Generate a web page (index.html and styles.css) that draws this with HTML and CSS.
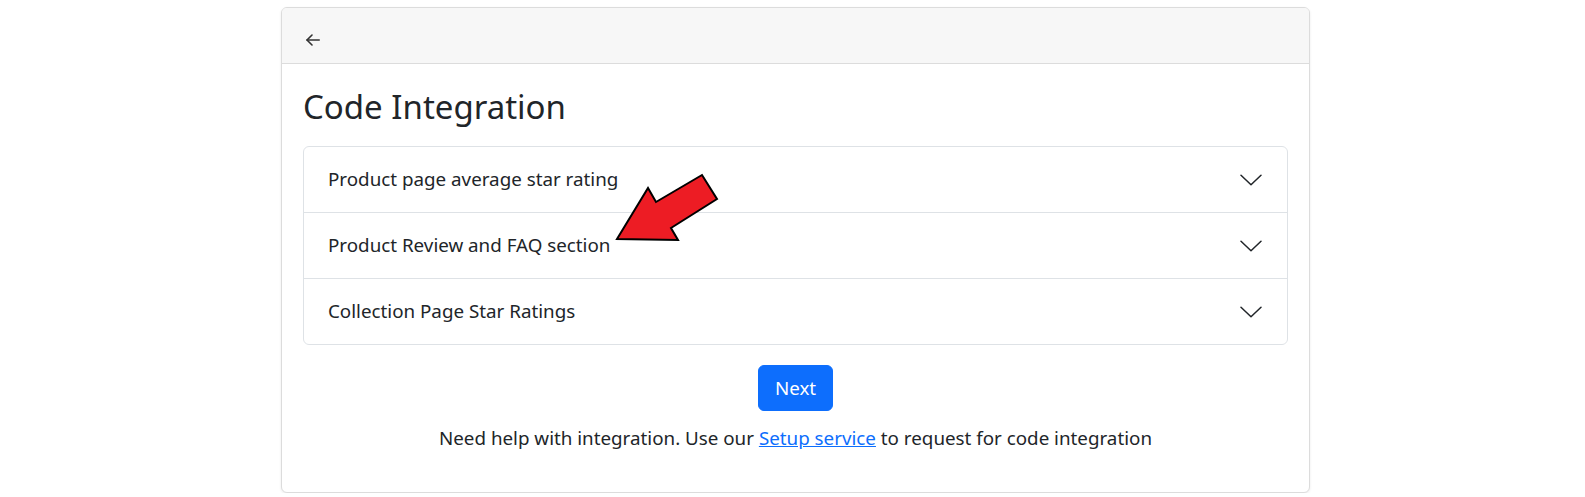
FILE: index.html
```html
<!DOCTYPE html>
<html lang="en">
<head>
<meta charset="utf-8">
<title>Code Integration</title>
<link rel="stylesheet" href="styles.css">
</head>
<body>
<div class="page">
  <div class="card">
    <div class="card-header">
      <button class="back" aria-label="Back">
        <svg width="14" height="12" viewBox="0 0 14 12" fill="none" stroke="#333" stroke-width="1.6" stroke-linecap="round" stroke-linejoin="round"><path d="M13.2 6H1"/><path d="M6 1L1 6l5 5"/></svg>
      </button>
    </div>
    <div class="card-body">
      <h2 class="title">Code Integration</h2>
      <div class="accordion">
        <div class="acc-item">
          <span class="acc-label">Product page average star rating</span>
          <svg class="chev" width="22" height="12" viewBox="0 0 22 12" fill="none" stroke="#212529" stroke-width="1.5" stroke-linecap="round" stroke-linejoin="round"><path d="M1 1.2l10 9.6 10-9.6"/></svg>
        </div>
        <div class="acc-item">
          <span class="acc-label">Product Review and FAQ section</span>
          <svg class="chev" width="22" height="12" viewBox="0 0 22 12" fill="none" stroke="#212529" stroke-width="1.5" stroke-linecap="round" stroke-linejoin="round"><path d="M1 1.2l10 9.6 10-9.6"/></svg>
        </div>
        <div class="acc-item">
          <span class="acc-label">Collection Page Star Ratings</span>
          <svg class="chev" width="22" height="12" viewBox="0 0 22 12" fill="none" stroke="#212529" stroke-width="1.5" stroke-linecap="round" stroke-linejoin="round"><path d="M1 1.2l10 9.6 10-9.6"/></svg>
        </div>
      </div>
      <div class="actions">
        <button class="btn-next">Next</button>
      </div>
      <p class="help">Need help with integration. Use our <a href="#">Setup service</a> to request for code integration</p>
    </div>
  </div>
  <svg class="pointer" width="115" height="80" viewBox="0 0 115 80"><polygon points="7,71 38,20 46,34 92,7 107,31 61,60 68,72" fill="#ed1c24" stroke="#000" stroke-width="2" stroke-linejoin="miter"/></svg>
</div>
</body>
</html>
```
FILE: styles.css
```css
* { box-sizing: border-box; }
html, body { margin: 0; padding: 0; background: #fff; }
body {
  font-family: "Noto Sans", "Open Sans", sans-serif;
  font-size: 18.8px;
  line-height: 27px;
  color: #212529;
}
.page {
  position: relative;
  padding: 7px 0 0 281px;
}
.card {
  width: 1029px;
  height: 486px;
  border: 1px solid #dcdcdc;
  border-radius: 6px;
  background: #fff;
  box-shadow: 0 1px 3px rgba(0,0,0,0.08);
  overflow: hidden;
}
.card-header {
  background: #f7f7f7;
  border-bottom: 1px solid #dcdcdc;
  height: 56px;
  padding: 26px 0 0 24px;
}
.back {
  display: block;
  border: 0;
  background: none;
  padding: 0;
  margin: 0;
  width: 14px;
  height: 12px;
  cursor: pointer;
}
.back svg { display: block; }
.card-body {
  padding: 21px 21px 0 21px;
}
.title {
  margin: 0 0 18px 0;
  font-size: 33px;
  line-height: 43px;
  font-weight: 400;
  color: #212529;
}
.accordion {
  border: 1px solid #dee2e6;
  border-radius: 6px;
}
.acc-item {
  display: flex;
  align-items: center;
  justify-content: space-between;
  height: 65px;
  padding: 0 25px 0 24px;
}
.acc-item + .acc-item {
  border-top: 1px solid #dee2e6;
  height: 66px;
}
.chev { display: block; }
.actions {
  display: flex;
  justify-content: center;
  padding-top: 20px;
}
.btn-next {
  font-family: inherit;
  font-size: 18.8px;
  line-height: 26px;
  color: #fff;
  background: #0d6efd;
  border: 1px solid #0d6efd;
  border-radius: 6px;
  padding: 9px 16px;
  height: 46px;
  cursor: pointer;
}
.help {
  margin: 14px 0 0 0;
  text-align: center;
}
.help a { color: #0d6efd; text-decoration: underline; }
.pointer {
  position: absolute;
  left: 610px;
  top: 168px;
}
```
